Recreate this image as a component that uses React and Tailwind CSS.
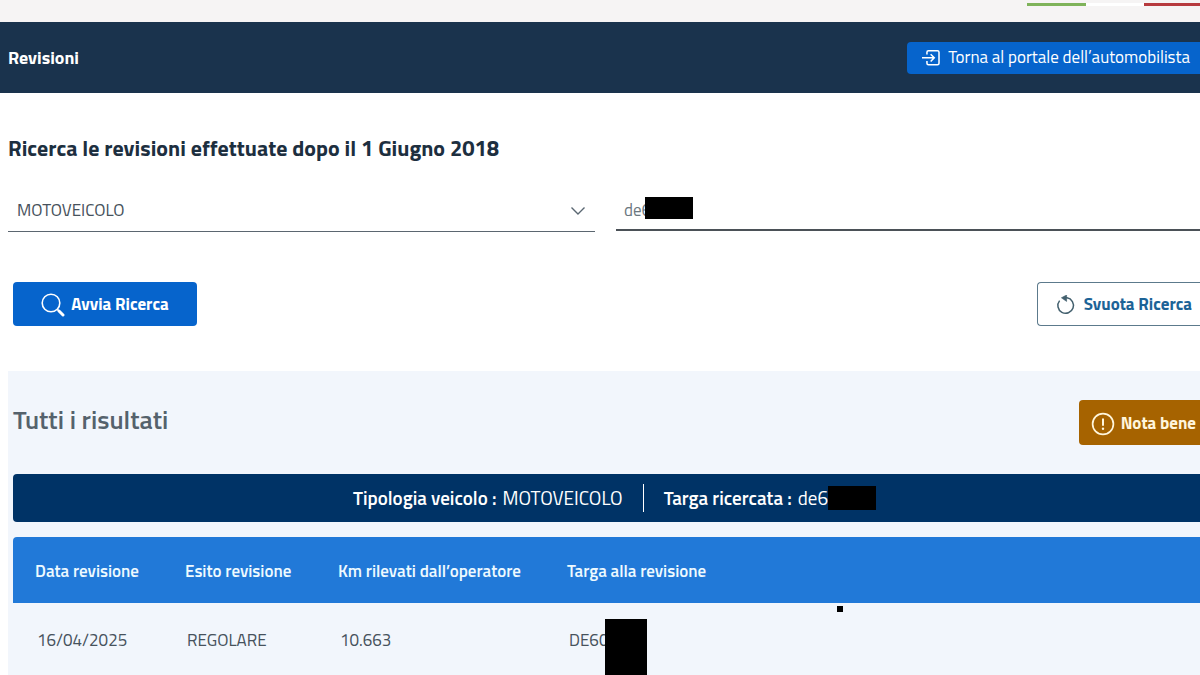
import { useState } from 'react';

const ExitIcon = () => (
  <svg className="w-[18px] h-[18px] shrink-0" viewBox="0 0 20 20" fill="none" stroke="currentColor" strokeWidth="1.7" aria-hidden="true">
    <path d="M5.5 6.2V3.6C5.5 2.5 6.1 1.9 7.2 1.9H17.2C18.3 1.9 18.9 2.5 18.9 3.6V15.9C18.9 17 18.3 17.6 17.2 17.6H7.2C6.1 17.6 5.5 17 5.5 15.9V13.4" />
    <path d="M0 9.8H13.2M9.6 5.8L13.6 9.8L9.6 13.8" />
  </svg>
);

const SearchIcon = () => (
  <svg className="w-6 h-6 shrink-0" viewBox="0 0 24 24" fill="none" stroke="currentColor" aria-hidden="true">
    <circle cx="10" cy="10" r="8.8" strokeWidth="1.6" />
    <path d="M16.4 16.4L18 18" strokeWidth="1.6" />
    <path d="M18 18L22 22" strokeWidth="3" strokeLinecap="round" />
  </svg>
);

const RestartIcon = () => (
  <svg className="w-5 h-5 shrink-0" viewBox="0 0 20 20" fill="none" stroke="currentColor" strokeWidth="1.5" aria-hidden="true">
    <path d="M8 2.8H11A7.8 7.8 0 1 1 3.6 5.6" />
    <path d="M10.6 0L5.4 2.8L10.6 6.4Z" fill="currentColor" stroke="currentColor" strokeWidth="0.6" />
  </svg>
);

const NoteIcon = () => (
  <svg className="w-6 h-6 shrink-0" viewBox="0 0 24 24" fill="none" stroke="currentColor" aria-hidden="true">
    <circle cx="12" cy="12" r="10.4" strokeWidth="1.7" />
    <path d="M12 6.5V13.8" strokeWidth="2" />
    <circle cx="12" cy="16.8" r="1.2" fill="currentColor" stroke="none" />
  </svg>
);

const ChevronIcon = () => (
  <svg className="absolute right-[9px] top-[18px] w-4 h-2.5 pointer-events-none text-[#5a6772]" viewBox="0 0 16 10" fill="none" stroke="currentColor" strokeWidth="1.4" aria-hidden="true">
    <path d="M1.5 1.5L8 8L14.5 1.5" />
  </svg>
);

const revisioni = [{ data: '16/04/2025', esito: 'REGOLARE', km: '10.663', targa: 'DE60' }];

const App = () => {
  const [veicolo, setVeicolo] = useState('MOTOVEICOLO');
  const [targa, setTarga] = useState('de6');

  return (
    <div className="min-h-screen flex flex-col bg-white text-[#47525c] font-['Titillium_Web',Roboto,sans-serif] overflow-hidden">
      {/* Tricolore */}
      <div className="h-[22px] bg-[#f6f4f4] flex justify-end pt-[3px]">
        <div className="flex h-[3px]">
          <span className="w-[59px] bg-[#7fb35a]" />
          <span className="w-[58px] bg-white" />
          <span className="w-14 bg-[#b73a3e]" />
        </div>
      </div>

      {/* Header */}
      <header className="h-[71px] bg-[#1a334d] text-white flex items-center justify-between pl-2">
        <h1 className="text-lg font-bold">Revisioni</h1>
        <a href="#portale" className="h-8 flex items-center gap-2 rounded-l bg-[#0664cc] pl-[15px] pr-[10px] text-[17px]">
          <ExitIcon />
          Torna al portale dell’automobilista
        </a>
      </header>

      <main className="flex-1 flex flex-col pl-2">
        <h2 className="mt-[39px] text-[22px] leading-8 font-bold text-[#1d2f3f]">
          Ricerca le revisioni effettuate dopo il 1 Giugno 2018
        </h2>

        <form onSubmit={(e) => e.preventDefault()}>
          <div className="mt-6 -mr-[3px] grid grid-cols-2 gap-[21px]">
            <div className="relative">
              <select
                aria-label="Tipo veicolo"
                value={veicolo}
                onChange={(e) => setVeicolo(e.target.value)}
                className="w-full h-11 appearance-none border-b border-[#5b6670] bg-white pl-[9px] pt-0.5 text-[17px] text-[#47525c]"
              >
                <option>MOTOVEICOLO</option>
                <option>AUTOVEICOLO</option>
              </select>
              <ChevronIcon />
            </div>
            <div className="relative">
              <input
                aria-label="Targa"
                value={targa}
                onChange={(e) => setTarga(e.target.value)}
                className="w-full h-[43px] border-b-2 border-[#4b5157] pl-2 pt-0.5 text-[17px] text-[#6b7780] outline-none"
              />
              <span className="absolute left-[29px] top-[9px] w-12 h-[22px] bg-black" />
            </div>
          </div>

          <div className="mt-[50px] pl-[5px] flex justify-between">
            <button type="submit" className="h-11 w-[184px] flex items-center justify-center gap-1.5 rounded bg-[#0664cc] pt-0.5 text-[17px] font-bold text-white">
              <SearchIcon />
              Avvia Ricerca
            </button>
            <button type="reset" className="h-11 flex items-center gap-2 rounded-l border border-r-0 border-[#5c7a8c] pl-[18px] pr-2 pt-0.5 text-[17px] font-bold text-[#1c6397]">
              <span className="text-[#43606e]">
                <RestartIcon />
              </span>
              Svuota Ricerca
            </button>
          </div>
        </form>

        {/* Risultati */}
        <section className="mt-[45px] flex-1 bg-[#f2f6fc] pl-[5px]">
          <div className="pt-[29px] flex justify-between">
            <h3 className="text-[26px] leading-10 font-semibold text-[#55626c]">Tutti i risultati</h3>
            <button className="h-[45px] flex items-center gap-1.5 rounded-l bg-[#a66300] pl-3 pr-1 pt-0.5 text-[17px] font-bold text-[#fff6dc]">
              <NoteIcon />
              Nota bene
            </button>
          </div>

          <div className="mt-[29px] h-12 flex items-center justify-center rounded-l bg-[#003366] pl-4 text-[19px] text-white">
            <p className="flex items-center gap-1.5">
              <b className="font-semibold">Tipologia veicolo :</b> MOTOVEICOLO
            </p>
            <span className="mx-5 w-px h-7 bg-white" />
            <p className="flex items-center gap-1.5">
              <b className="font-semibold">Targa ricercata :</b>
              <span className="flex items-center">
                de6
                <span className="w-12 h-6 bg-black" />
              </span>
            </p>
          </div>

          <table className="mt-[15px] w-full table-fixed text-left text-[17px]">
            <colgroup>
              <col className="w-[150px]" />
              <col className="w-[153px]" />
              <col className="w-[229px]" />
              <col />
            </colgroup>
            <thead>
              <tr className="h-[66px] bg-[#2179d8] text-[#eefaff]">
                <th className="rounded-tl pl-[22px] pt-1 font-semibold">Data revisione</th>
                <th className="pl-[22px] pt-1 font-semibold">Esito revisione</th>
                <th className="pl-[22px] pt-1 font-semibold">Km rilevati dall’operatore</th>
                <th className="pl-[22px] pt-1 font-semibold">Targa alla revisione</th>
              </tr>
            </thead>
            <tbody>
              {revisioni.map((r) => (
                <tr key={r.data} className="h-[72px]">
                  <td className="pl-6 pt-1">{r.data}</td>
                  <td className="pl-6 pt-1">{r.esito}</td>
                  <td className="pl-6 pt-1">{r.km}</td>
                  <td className="relative pl-6 pt-1">
                    {r.targa}
                    <span className="absolute left-[60px] top-4 bottom-0 w-[42px] bg-black" />
                    <span className="absolute left-[292px] top-[3px] w-1.5 h-1.5 bg-black" />
                  </td>
                </tr>
              ))}
            </tbody>
          </table>
        </section>
      </main>
    </div>
  );
};

export default App;
